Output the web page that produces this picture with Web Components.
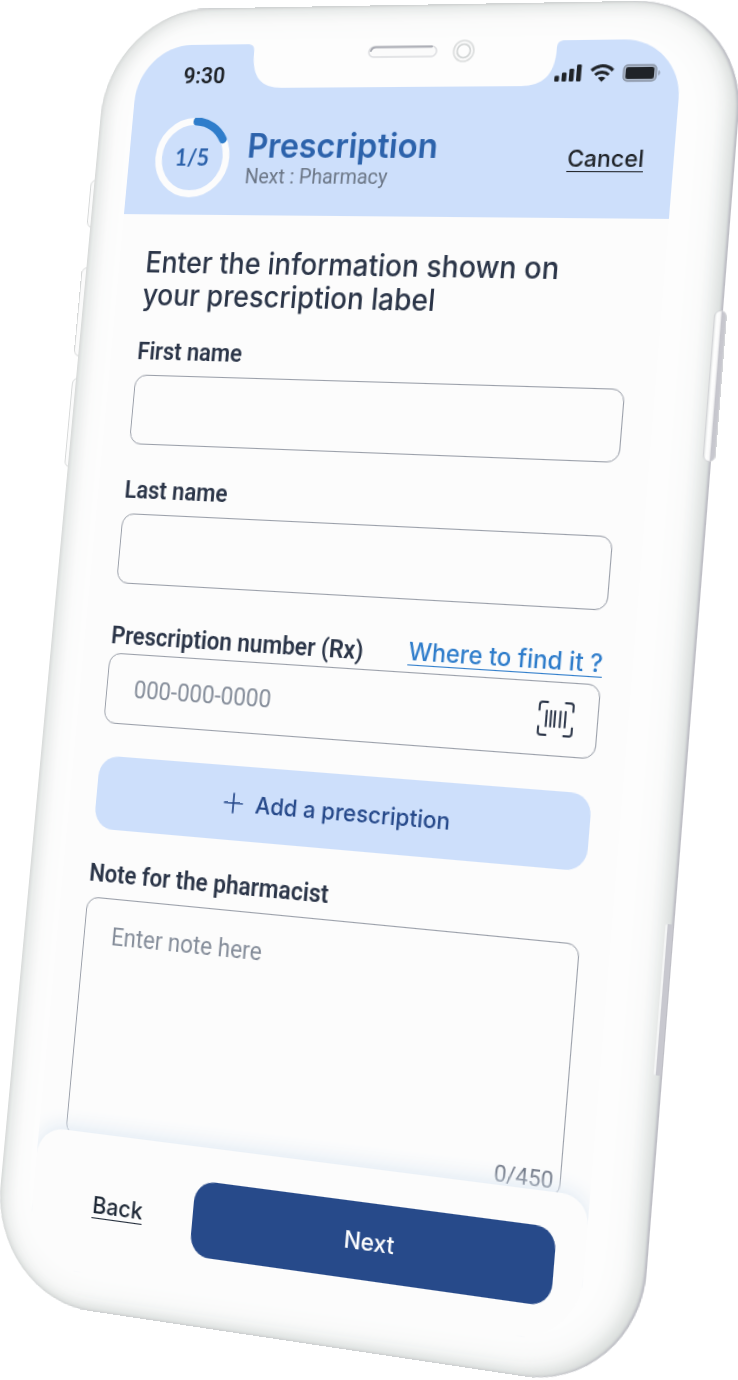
<!DOCTYPE html>
<html lang="en">
<head>
<meta charset="utf-8">
<meta name="viewport" content="width=device-width, initial-scale=1">
<title>Prescription</title>
<style>
  body { margin: 0; background: #fff; }
</style>
</head>
<body>
<tilted-phone>
  <step-header step="1" total="5" heading="Prescription" next="Pharmacy"></step-header>
  <rx-form></rx-form>
  <action-bar></action-bar>
</tilted-phone>

<script>
const define = (name, html, setup) => {
  const template = document.createElement('template');
  template.innerHTML = html;
  customElements.define(name, class extends HTMLElement {
    connectedCallback() {
      if (this.shadowRoot) return;
      this.attachShadow({ mode: 'open' }).append(template.content.cloneNode(true));
      if (setup) setup(this, this.shadowRoot);
    }
  });
};

/* A phone seen in perspective. The device is laid out flat and then projected. */
define('tilted-phone', `
  <style>
    :host { display: block; max-width: 1100px; margin: 0 auto; aspect-ratio: 738 / 1380; overflow: hidden;
      font-family: Roboto, "Liberation Sans", sans-serif; color: #2b3548; }
    .device { position: relative; box-sizing: border-box; width: 638px; padding: 36px 57px 34px 35px;
      transform-origin: 0 0;
      transform: scale(var(--zoom, 1))
        matrix3d(0.91447, -0.017253, 0, -0.00011941, -0.0964, 1.00409, 0, -0.00002238, 0, 0, 1, 0, 139.6, 45.6, 0, 1)
        translate(-35px, -36px); }
    .shell { position: absolute; inset: 0; border-radius: 106px; background: #fdfdfd;
      box-shadow: inset -2px 0 2px #bdbdc5, inset 0 0 4px #c9cccb, inset -9px -4px 14px #d9dddb,
        inset 6px 4px 14px #e0e3e2, inset -4px -2px 44px #edefee; }
    .key { position: absolute; box-sizing: border-box; border-radius: 6px; }
    .left { left: -4px; width: 14px; background: #fbfbfb; border: 1px solid #d6d8d8; }
    .mute { top: 169px; height: 48px; }
    .up { top: 256px; height: 88px; left: -5px; }
    .down { top: 365px; height: 88px; }
    .right { right: -4px; width: 12px; background: linear-gradient(90deg, #e4e6e6, #fff 20%, #f8f8f8 50%, #c5c5cc 65%, #c9c9d0); border: 1px solid #d4d5d8; }
    .power { top: 286px; height: 138px; }
    .sim { top: 839px; height: 134px; right: 1px; width: 7px;
      border: 0; border-left: 2px solid #f4f5f5; border-radius: 2px; background: #c8c8cf; }
    .screen { position: relative; border-radius: 56px 56px 60px 60px; overflow: hidden; background: #fcfcfc; }
    .notch { position: absolute; top: 36px; left: 149px; width: 320px; height: 43px; display: block; overflow: visible; }
  </style>
  <div class="device">
    <div class="key left mute"></div><div class="key left up"></div><div class="key left down"></div>
    <div class="shell"></div>
    <div class="key right power"></div><div class="key right sim"></div>
    <div class="screen"><slot></slot></div>
    <svg class="notch" viewBox="0 0 320 43" aria-hidden="true">
      <path d="M0 -1V0C6 0 8 2 8 8V12C9 32 18 43 40 43H280C302 43 311 32 312 12V8C312 2 314 0 320 0V-1Z" fill="#fdfdfd"/>
      <rect x="126" y="4" width="68" height="10" rx="5" fill="#fbfbfb" stroke="#dcdde0" stroke-width="1.5"/>
      <path d="M128 8C129 5 131 4.500 133 4.500H189" fill="none" stroke="#a9abb3" stroke-width="2" stroke-linecap="round"/>
      <circle cx="221" cy="9" r="10" fill="#fafafa" stroke="#dcdede" stroke-width="1.600"/>
      <circle cx="221" cy="9" r="6.500" fill="#fdfdfd" stroke="#d0d3d3" stroke-width="1.600"/>
    </svg>
  </div>`, (host, root) => {
  const device = root.querySelector('.device');
  const fit = () => device.style.setProperty('--zoom', host.clientWidth / 738);
  fit();
  new ResizeObserver(fit).observe(host);
});

define('status-bar', `
  <style>
    :host { display: flex; align-items: center; height: 62px; padding: 0 19px 0 50px; color: #1f2328; }
    time { font: 600 22px/24px Roboto, sans-serif; margin-right: auto; }
    svg { display: block; }
    .wifi { margin: 0 8px; }
  </style>
  <time>9:30</time>
  <svg width="26" height="16" viewBox="0 0 26 16" fill="currentColor" aria-hidden="true">
    <rect x="0" y="10.500" width="4.500" height="5.500" rx="1.200"/><rect x="7" y="7.500" width="4.500" height="8.500" rx="1.200"/>
    <rect x="14" y="4" width="4.500" height="12" rx="1.200"/><rect x="21" y="0" width="4.500" height="16" rx="1.200"/>
  </svg>
  <svg class="wifi" width="23" height="17" viewBox="0 0 23 17" fill="none" stroke="currentColor" stroke-width="3" aria-hidden="true">
    <path d="M1.200 5.800C7 .2 16 .2 21.800 5.800"/><path d="M5 10C8.800 6.500 14.200 6.500 18 10"/>
    <path d="M11.500 16.500L7.900 13C10 11.200 13 11.200 15.100 13Z" fill="currentColor" stroke="none"/>
  </svg>
  <svg width="36" height="17" viewBox="0 0 36 17" aria-hidden="true">
    <rect x="1" y="1" width="31" height="15" rx="4" fill="#aab6c8" stroke="#8e99aa" stroke-width="1.500"/>
    <rect x="3" y="3" width="27" height="11" rx="2" fill="#1f2328"/><path d="M34 6C36 7 36 10 34 11Z" fill="#8e99aa"/>
  </svg>`);

define('progress-ring', `
  <style>
    :host { display: grid; width: 78px; height: 78px; place-items: center; }
    svg, span { grid-area: 1 / 1; }
    span { font: 700 22px/28px Lato, sans-serif; color: #2c62ab; }
  </style>
  <svg width="78" height="78" viewBox="0 0 78 78" fill="none" stroke-width="7" aria-hidden="true">
    <circle cx="39" cy="39" r="35.500" stroke="#fcfcfc"/>
    <path d="M41 3.500A35.500 35.500 0 0 1 69.500 21" stroke="#2f7dcb" stroke-width="8" stroke-linecap="round"/>
  </svg>
  <span></span>`, (host, root) => {
  root.querySelector('span').textContent = host.getAttribute('value');
});

define('step-header', `
  <style>
    :host { display: block; background: #cddffb; }
    .row { display: flex; align-items: center; gap: 18px; padding: 10px 28px 17px; }
    .titles { flex: 1; }
    h1 { margin: 0; font: 600 33px/36px Inter, sans-serif; color: #2c62ab; }
    p { margin: 0; font: 400 20px/24px Roboto, sans-serif; color: #6b7686; }
    button { padding: 0; border: 0; background: none; font: 500 22px/28px Inter, sans-serif; color: #1f2328;
      text-decoration: underline; text-decoration-thickness: 1px; text-underline-offset: 4px; }
  </style>
  <status-bar></status-bar>
  <div class="row">
    <progress-ring></progress-ring>
    <div class="titles"><h1></h1><p></p></div>
    <button type="button">Cancel</button>
  </div>`, (host, root) => {
  const get = name => host.getAttribute(name);
  root.querySelector('h1').textContent = get('heading');
  root.querySelector('p').textContent = 'Next : ' + get('next');
  const ring = document.createElement('progress-ring');
  ring.setAttribute('value', get('step') + '/' + get('total'));
  root.querySelector('progress-ring').replaceWith(ring);
});

define('text-field', `
  <style>
    :host { display: block; }
    .top { display: flex; align-items: flex-end; justify-content: space-between; margin-bottom: 10px; }
    :host([linked]) .top { height: 30px; margin-bottom: 4px; }
    label { font: 600 23px/24px Roboto, sans-serif; color: #2b3548; }
    .box { display: flex; align-items: center; box-sizing: border-box; height: 68px; border: 1px solid #9a9fa9; border-radius: 12px; }
    input { flex: 1; min-width: 0; height: 100%; box-sizing: border-box; padding: 0 28px; border: 0; outline: 0; background: none;
      font: 400 23px/28px Roboto, sans-serif; color: #2b3548; }
    input::placeholder { color: #858d9a; opacity: 1; }
  </style>
  <div class="top"><label for="field"></label><slot name="link"></slot></div>
  <div class="box"><input id="field" type="text"><slot name="icon"></slot></div>`, (host, root) => {
  root.querySelector('label').textContent = host.getAttribute('label');
  root.querySelector('input').placeholder = host.getAttribute('placeholder') || '';
});

define('note-field', `
  <style>
    :host { display: block; }
    label { display: block; margin-bottom: 10px; font: 600 23px/24px Roboto, sans-serif; color: #2b3548; }
    .box { display: flex; flex-direction: column; box-sizing: border-box; height: 227px; border: 1px solid #9a9fa9; border-radius: 12px; }
    textarea { flex: 1; box-sizing: border-box; padding: 22px 28px 0; border: 0; outline: 0; resize: none; background: none;
      font: 400 23px/28px Roboto, sans-serif; color: #2b3548; }
    textarea::placeholder { color: #858d9a; opacity: 1; }
    output { align-self: flex-end; padding: 0 6px; font: 400 21px/28px Roboto, sans-serif; color: #6b7280; }
  </style>
  <label for="note">Note for the pharmacist</label>
  <div class="box">
    <textarea id="note" placeholder="Enter note here" maxlength="450"></textarea>
    <output for="note">0/450</output>
  </div>`, (host, root) => {
  const note = root.querySelector('textarea');
  note.addEventListener('input', () => { root.querySelector('output').textContent = note.value.length + '/450'; });
});

define('app-button', `
  <style>
    :host { display: block; }
    button { display: flex; align-items: center; justify-content: center; gap: 12px; width: 100%; height: 70px; padding: 0; border: 0;
      border-radius: 20px; background: #cddffb; color: #26498a; font: 500 22px/28px Inter, sans-serif; }
    :host([primary]) button { background: #274a8a; color: #fff; }
    :host([plain]) button { background: none; color: #1f2937; text-decoration: underline;
      text-decoration-thickness: 1px; text-underline-offset: 4px; }
  </style>
  <button type="button"><slot></slot></button>`);

define('rx-form', `
  <style>
    :host { display: block; padding: 31px 28px 0; }
    h2 { margin: 0 0 28px; font: 500 28px/32px Inter, sans-serif; color: #2b3548; }
    .fields { display: grid; gap: 33px; }
    a { font: 500 23px/30px Inter, sans-serif; color: #2f7dcb; text-decoration: underline;
      text-decoration-thickness: 1px; text-underline-offset: 4px; }
    .scan { display: block; margin-right: 22px; }
    app-button, note-field { margin-top: -2px; }
  </style>
  <h2>Enter the information shown on<br>your prescription label</h2>
  <div class="fields">
    <text-field label="First name"></text-field>
    <text-field label="Last name"></text-field>
    <text-field label="Prescription number (Rx)" placeholder="000-000-0000" linked>
      <a slot="link" href="#where">Where to find it ?</a>
      <svg slot="icon" class="scan" width="34" height="32" viewBox="0 0 36 34" fill="none" stroke="#2b3548" stroke-width="2" stroke-linecap="round" aria-hidden="true">
        <path d="M1 9V4Q1 1 4 1H9M27 1H32Q35 1 35 4V9M35 25V30Q35 33 32 33H27M9 33H4Q1 33 1 30V25"/>
        <path d="M8.500 9.500V24.500M13 9.500V24.500M17 9.500V24.500M22.500 9.500V24.500M27.500 9.500V24.500"/>
      </svg>
    </text-field>
    <app-button>
      <svg width="20" height="20" viewBox="0 0 20 20" stroke="#26498a" stroke-width="1.700" stroke-linecap="round" aria-hidden="true"><path d="M10 1V19M1 10H19"/></svg>
      Add a prescription
    </app-button>
    <note-field></note-field>
  </div>`);

define('action-bar', `
  <style>
    :host { display: grid; grid-template-columns: 122px 1fr; gap: 16px; position: relative; margin-top: -5px;
      padding: 31px 28px 30px; border-radius: 26px 26px 0 0; background: #fcfcfc; box-shadow: 0 -2px 20px #dde8f3; }
  </style>
  <app-button plain>Back</app-button>
  <app-button primary>Next</app-button>`);
</script>
</body>
</html>
